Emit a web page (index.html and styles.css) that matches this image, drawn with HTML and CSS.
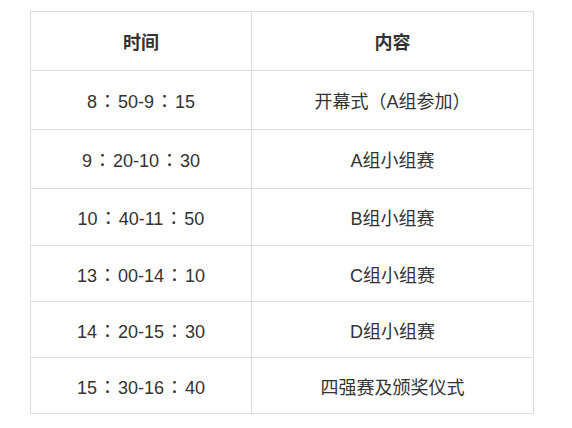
FILE: index.html
```html
<!DOCTYPE html>
<html lang="zh">
<head>
<meta charset="utf-8">
<link rel="stylesheet" href="styles.css">
</head>
<body>
<div class="page">
  <table class="schedule">
    <colgroup><col class="c-time"><col class="c-content"></colgroup>
    <thead>
      <tr class="r59"><th>时间</th><th>内容</th></tr>
    </thead>
    <tbody>
      <tr class="r59"><td>8<span class="colon">：</span>50-9<span class="colon">：</span>15</td><td>开幕式（A组参加）</td></tr>
      <tr class="r59"><td>9<span class="colon">：</span>20-10<span class="colon">：</span>30</td><td>A组小组赛</td></tr>
      <tr class="r57"><td>10<span class="colon">：</span>40-11<span class="colon">：</span>50</td><td>B组小组赛</td></tr>
      <tr class="r56"><td>13<span class="colon">：</span>00-14<span class="colon">：</span>10</td><td>C组小组赛</td></tr>
      <tr class="r56"><td>14<span class="colon">：</span>20-15<span class="colon">：</span>30</td><td>D组小组赛</td></tr>
      <tr class="r56"><td>15<span class="colon">：</span>30-16<span class="colon">：</span>40</td><td>四强赛及颁奖仪式</td></tr>
    </tbody>
  </table>
</div>
</body>
</html>
```

FILE: styles.css
```css
html, body {
  margin: 0;
  padding: 0;
  background: #fff;
}
.page {
  padding: 11px 0 0 30px;
}
.schedule {
  border-collapse: collapse;
  table-layout: fixed;
  width: 503px;
  font-family: "Liberation Sans", "Noto Sans CJK SC", sans-serif;
  font-size: 18px;
  color: #333;
}
.c-time { width: 221px; }
.c-content { width: 282px; }
.schedule th,
.schedule td {
  border: 1px solid #ddd;
  text-align: center;
  vertical-align: middle;
  padding: 0;
}
.schedule th {
  font-weight: bold;
}
.colon {
  font-family: "Noto Sans CJK TC", sans-serif;
  margin: 0 1.5px;
}
.r59 { height: 59px; }
.r57 { height: 57px; }
.r56 { height: 56px; }
```
